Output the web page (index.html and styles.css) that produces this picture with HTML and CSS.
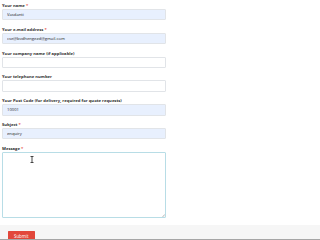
FILE: index.html
```html
<!DOCTYPE html>
<html>
<head>
<meta charset="utf-8">
<link rel="stylesheet" href="styles.css">
</head>
<body>
<form class="quote-form">
  <div class="field">
    <label class="label">Your name <span class="req">*</span></label>
    <input class="input filled" type="text" value="Vasdanti">
  </div>
  <div class="field">
    <label class="label">Your e-mail address <span class="req">*</span></label>
    <input class="input filled" type="text" value="cse@bvdhengezd@gmail.com">
  </div>
  <div class="field">
    <label class="label">Your company name (if applicable)</label>
    <input class="input" type="text" value="">
  </div>
  <div class="field">
    <label class="label">Your telephone number</label>
    <input class="input" type="text" value="">
  </div>
  <div class="field">
    <label class="label">Your Post Code (for delivery, required for quote requests)</label>
    <input class="input filled" type="text" value="10001">
  </div>
  <div class="field">
    <label class="label">Subject <span class="req">*</span></label>
    <input class="input filled" type="text" value="enquiry">
  </div>
  <div class="field field-message">
    <label class="label">Message <span class="req">*</span></label>
    <div class="textarea-wrap">
      <textarea class="textarea"></textarea>
      <svg class="ibeam" width="4" height="7" viewBox="0 0 4 7"><path d="M0.5 0.5h3M2 0.5v6M0.5 6.5h3" stroke="#333" stroke-width="0.9" fill="none"/></svg>
      <svg class="grip" width="3" height="3" viewBox="0 0 3 3"><path d="M0.3 2.8L2.8 0.3M1.4 2.8L2.8 1.4" stroke="#9a9a9a" stroke-width="0.5" fill="none"/></svg>
    </div>
  </div>
  <div class="actions">
    <button class="submit" type="button">Submit</button>
  </div>
</form>
<div class="bottom-line"></div>
</body>
</html>
```
FILE: styles.css
```css
html, body {
  margin: 0;
  padding: 0;
  background: #ffffff;
  overflow: hidden;
}
body {
  font-family: "Open Sans", "Liberation Sans", Arial, sans-serif;
  color: #333;
}
.quote-form {
  padding-top: 3px;
}
.field {
  display: flex;
  flex-direction: column;
  padding-left: 2px;
  width: 164px;
  margin-bottom: 6.65px;
}
.label {
  display: block;
  height: 6px;
  line-height: 6px;
  font-size: 4.2px;
  font-weight: 700;
  color: #2e2e2e;
  white-space: nowrap;
}
.req {
  color: #e74c3c;
}
.input {
  box-sizing: border-box;
  height: 11.2px;
  width: 164px;
  margin: 0;
  padding: 0 0 0 4px;
  border: 0.6px solid #e1e4e8;
  border-radius: 1px;
  background: #fff;
  font-family: "Open Sans", "Liberation Sans", Arial, sans-serif;
  font-size: 4.2px;
  color: #222;
  outline: none;
}
.input.filled {
  background: #e8f0fe;
}
.field-message {
  margin-bottom: 7px;
}
.textarea-wrap {
  position: relative;
  width: 164px;
  height: 65.6px;
}
.textarea {
  box-sizing: border-box;
  display: block;
  width: 164px;
  height: 65.6px;
  margin: 0;
  padding: 2px;
  border: 0.8px solid #b8dde6;
  border-radius: 1px;
  background: #fff;
  resize: none;
  outline: none;
}
.ibeam {
  position: absolute;
  left: 28px;
  top: 4px;
}
.grip {
  position: absolute;
  right: 1px;
  bottom: 1px;
}
.actions {
  background: #f6f6f6;
  padding: 6.3px 0 0 8px;
  height: 8.5px;
  overflow: hidden;
}
.submit {
  display: block;
  width: 26.5px;
  height: 10px;
  padding: 0;
  margin: 0;
  border: none;
  border-radius: 0.5px;
  background: #e2473b;
  color: #fff;
  font-family: "Open Sans", "Liberation Sans", Arial, sans-serif;
  font-size: 4.4px;
  line-height: 8px;
  text-align: center;
}
.bottom-line {
  position: fixed;
  left: 0;
  right: 0;
  bottom: 0;
  height: 1.2px;
  background: #a6a6a6;
}
```
